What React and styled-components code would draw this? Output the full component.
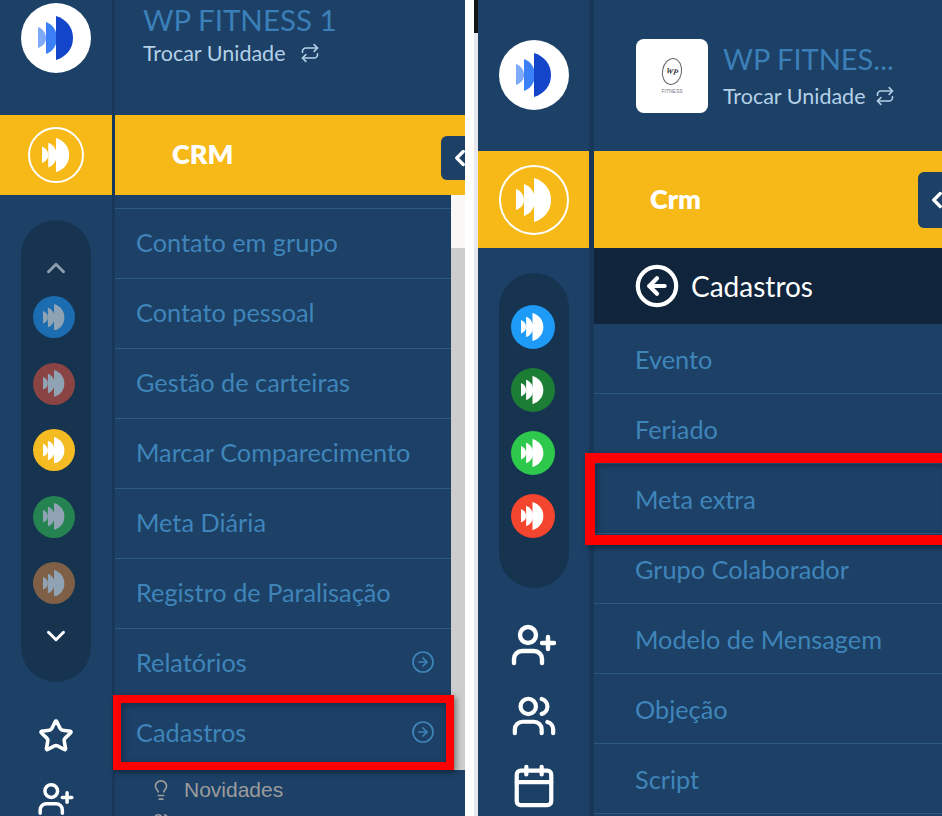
import React from 'react'
import styled, { createGlobalStyle } from 'styled-components'
import {
  Calendar,
  ChevronDown,
  ChevronLeft,
  ChevronUp,
  CircleArrowLeft,
  CircleArrowRight,
  Lightbulb,
  Repeat,
  Star,
  UserPlus,
  Users,
} from 'lucide-react'

const GlobalStyle = createGlobalStyle`
  html, body {
    margin: 0;
    padding: 0;
    background: #fff;
  }
  * {
    box-sizing: border-box;
  }
`

const Page = styled.div`
  display: flex;
  width: 942px;
  height: 816px;
  overflow: hidden;
  font-family: Lato, "Open Sans", sans-serif;
  background: #fff;
`

const Panel = styled.section`
  display: flex;
  flex: none;
  position: relative;
  width: ${(p) => p.$width}px;
  height: 816px;
  overflow: hidden;
  background: #1c4066;
`

const Divider = styled.div`
  flex: none;
  width: 4px;
  margin-left: 9px;
  background: linear-gradient(#141414 33px, #e8e8ee 33px);
`

const Rail = styled.aside`
  display: flex;
  flex-direction: column;
  align-items: center;
  flex: none;
  width: ${(p) => p.$width}px;
  border-right: ${(p) => p.$line}px solid #183859;
`

const LogoSlot = styled.div`
  display: flex;
  flex: none;
  justify-content: center;
  width: 100%;
  height: ${(p) => p.$height}px;
  padding-top: ${(p) => p.$top}px;
`

const LogoCircle = styled.div`
  display: flex;
  align-items: center;
  justify-content: center;
  width: 70px;
  height: 70px;
  border-radius: 50%;
  background: #fff;
`

const RailBand = styled.div`
  display: flex;
  flex: none;
  align-items: center;
  justify-content: center;
  width: 100%;
  height: ${(p) => p.$height}px;
  background: #f6b918;
`

const Ring = styled.div`
  display: flex;
  align-items: center;
  justify-content: center;
  width: ${(p) => p.$size}px;
  height: ${(p) => p.$size}px;
  border: 2px solid #fff;
  border-radius: 50%;
`

const Pill = styled.div`
  display: flex;
  flex-direction: column;
  align-items: center;
  flex: none;
  width: 70px;
  height: ${(p) => p.$height}px;
  margin-top: 25px;
  padding-top: ${(p) => p.$top}px;
  border-radius: 35px;
  background: #16334f;
`

const Chevron = styled.div`
  display: flex;
  flex: none;
  justify-content: center;
  height: 24px;
  color: ${(p) => p.$color};
  margin: ${(p) => p.$margin || 0};
`

const Dots = styled.div`
  display: flex;
  flex-direction: column;
  align-items: center;
  gap: ${(p) => p.$gap}px;
  margin: ${(p) => p.$margin || 0};
`

const Dot = styled.div`
  display: flex;
  align-items: center;
  justify-content: center;
  flex: none;
  width: ${(p) => p.$size}px;
  height: ${(p) => p.$size}px;
  border-radius: 50%;
  background: ${(p) => p.$color};
`

const Tools = styled.div`
  display: flex;
  flex-direction: column;
  align-items: center;
  flex: none;
  margin-top: ${(p) => p.$top}px;
  gap: ${(p) => p.$gap}px;
  color: #fff;
`

const Main = styled.div`
  display: flex;
  flex-direction: column;
  flex: 1;
  min-width: 0;
`

const Header = styled.header`
  display: flex;
  flex: none;
  align-items: flex-start;
  height: ${(p) => p.$height}px;
  padding: ${(p) => p.$top}px 0 0 ${(p) => p.$left}px;
  gap: 15px;
`

const Tile = styled.div`
  display: flex;
  flex-direction: column;
  align-items: center;
  justify-content: center;
  width: 72px;
  height: 74px;
  border-radius: 8px;
  background: #fff;
`

const TileMark = styled.div`
  display: flex;
  align-items: center;
  justify-content: center;
  width: 20px;
  height: 27px;
  border: 1px solid #666;
  border-radius: 50%;
  transform: rotate(10deg);
  font: italic 700 8px "Liberation Serif", serif;
  color: #333;
`

const TileLabel = styled.div`
  margin-top: 3px;
  font: 5px "Liberation Sans", sans-serif;
  color: #778;
`

const UnitInfo = styled.div`
  display: flex;
  flex-direction: column;
  gap: ${(p) => p.$gap}px;
  padding-top: ${(p) => p.$top}px;
`

const UnitName = styled.div`
  font-size: ${(p) => p.$size}px;
  line-height: 32px;
  color: #3b7fb8;
  white-space: nowrap;
`

const SwitchUnit = styled.div`
  display: flex;
  align-items: center;
  gap: ${(p) => p.$gap}px;
  font-size: 21.5px;
  line-height: 26px;
  color: #b4d0e6;
  white-space: nowrap;
`

const Band = styled.div`
  display: flex;
  align-items: center;
  flex: none;
  height: ${(p) => p.$height}px;
  padding: 0 0 3px ${(p) => p.$left}px;
  background: #f6b918;
  color: #fff;
  font-size: 27px;
  font-weight: 800;
`

const Toggle = styled.div`
  display: flex;
  align-items: center;
  justify-content: flex-end;
  position: absolute;
  right: 0;
  top: ${(p) => p.$top}px;
  width: 24px;
  height: ${(p) => p.$height}px;
  border-radius: 6px 0 0 6px;
  background: #1c4066;
  color: #fff;
  overflow: hidden;
`

const Body = styled.div`
  display: flex;
  height: 575px;
  flex: none;
`

const List = styled.nav`
  flex: 1;
  padding-top: ${(p) => p.$top || 0}px;
`

const Row = styled.div`
  display: flex;
  align-items: center;
  justify-content: space-between;
  height: 70px;
  padding: 0 16px ${(p) => p.$lift || 0}px ${(p) => p.$left}px;
  border-${(p) => p.$edge}: 1px solid #2c5b80;
  color: #3f85ba;
  font-size: 25.3px;
  white-space: nowrap;
`

const Scrollbar = styled.div`
  flex: none;
  width: 14px;
  background: linear-gradient(#faf8f6 53px, #cdcdcd 53px);
`

const Footer = styled.div`
  display: flex;
  flex-direction: column;
  flex: none;
  gap: 9px;
  padding: 8px 0 0 35px;
`

const FooterItem = styled.div`
  display: flex;
  flex: none;
  align-items: center;
  gap: 12px;
  height: 24px;
  color: #9c9c9c;
  font: 21px "Liberation Sans", sans-serif;
`

const BackHeader = styled.div`
  display: flex;
  align-items: center;
  flex: none;
  height: 76px;
  padding-left: 40px;
  gap: 11px;
  background: #10243b;
  color: #fff;
  font-size: 28px;
`

const Highlight = styled.div`
  position: absolute;
  left: ${(p) => p.$x}px;
  top: ${(p) => p.$y}px;
  width: ${(p) => p.$w}px;
  height: ${(p) => p.$h}px;
  border: ${(p) => p.$border}px solid #fe0000;
  box-shadow: 2px 2px 6px rgba(0, 0, 0, 0.45), inset 2px 2px 6px rgba(0, 0, 0, 0.3);
`

function BrandMark({ width = 36, colors = ['#fff', '#fff', '#fff'] }) {
  return (
    <svg width={width} height={(width * 44) / 36} viewBox="0 0 36 44">
      <path d="M0 11C5 13 8 17 8 22C8 27 5 30 0 32Z" fill={colors[0]} />
      <path d="M8 6C14 8 19 14 19 22C19 30 14 36 8 38Z" fill={colors[1]} />
      <path d="M18 0C28 3 35 11 35 22C35 33 28 41 18 44Z" fill={colors[2]} />
    </svg>
  )
}

const logoColors = ['#7fa9f9', '#3b80f7', '#1245c9']
const dimMark = ['#8fa3b5', '#8fa3b5', '#8fa3b5']

const leftDots = [
  { color: '#1b6cb0', mark: dimMark },
  { color: '#8a4444', mark: dimMark },
  { color: '#f4bb22' },
  { color: '#248350', mark: dimMark },
  { color: '#7f6047', mark: dimMark },
]
const rightDots = ['#1e9bf7', '#1c7d35', '#2ec84c', '#f4452e']

const leftMenu = [
  { label: 'Contato em grupo' },
  { label: 'Contato pessoal' },
  { label: 'Gestão de carteiras' },
  { label: 'Marcar Comparecimento' },
  { label: 'Meta Diária' },
  { label: 'Registro de Paralisação' },
  { label: 'Relatórios', more: true },
  { label: 'Cadastros', more: true },
]
const rightMenu = ['Evento', 'Feriado', 'Meta extra', 'Grupo Colaborador', 'Modelo de Mensagem', 'Objeção', 'Script']

function LeftPanel() {
  return (
    <Panel $width={465}>
      <Rail $width={115} $line={3}>
        <LogoSlot $height={115} $top={3}>
          <LogoCircle>
            <BrandMark colors={logoColors} />
          </LogoCircle>
        </LogoSlot>
        <RailBand $height={80}>
          <Ring $size={56}>
            <BrandMark width={28} />
          </Ring>
        </RailBand>
        <Pill $height={462} $top={33}>
          <Chevron $color="#8c9cac">
            <ChevronUp size={30} strokeWidth={2.4} />
          </Chevron>
          <Dots $gap={24.5} $margin="19px 4px 0 0">
            {leftDots.map((dot) => (
              <Dot key={dot.color} $size={42} $color={dot.color}>
                <BrandMark width={22} colors={dot.mark} />
              </Dot>
            ))}
          </Dots>
          <Chevron $color="#fff" $margin="17px 0 0">
            <ChevronDown size={30} strokeWidth={2.4} />
          </Chevron>
        </Pill>
        <Tools $top={36} $gap={26}>
          <Star size={36} strokeWidth={2.4} />
          <UserPlus size={38} strokeWidth={2.2} />
        </Tools>
      </Rail>
      <Main>
        <Header $height={115} $top={4} $left={28}>
          <UnitInfo $gap={4} $top={0}>
            <UnitName $size={29.5}>WP FITNESS 1</UnitName>
            <SwitchUnit $gap={14}>
              Trocar Unidade
              <Repeat size={20} />
            </SwitchUnit>
          </UnitInfo>
        </Header>
        <Band $height={80} $left={57}>CRM</Band>
        <Body>
          <List $top={13}>
            {leftMenu.map((item) => (
              <Row key={item.label} $left={21} $edge="top" $lift={4}>
                {item.label}
                {item.more && <CircleArrowRight size={24} strokeWidth={1.7} />}
              </Row>
            ))}
          </List>
          <Scrollbar />
        </Body>
        <Footer>
          <FooterItem>
            <Lightbulb size={22} strokeWidth={1.8} />
            Novidades
          </FooterItem>
          <FooterItem>
            <Users size={22} strokeWidth={1.8} />
          </FooterItem>
        </Footer>
      </Main>
      <Toggle $top={136} $height={44}>
        <ChevronLeft size={26} strokeWidth={3} style={{ marginRight: -8 }} />
      </Toggle>
      <Highlight $x={113} $y={695} $w={341} $h={75} $border={8} />
    </Panel>
  )
}

function RightPanel() {
  return (
    <Panel $width={464}>
      <Rail $width={116} $line={5}>
        <LogoSlot $height={151} $top={40}>
          <LogoCircle>
            <BrandMark colors={logoColors} />
          </LogoCircle>
        </LogoSlot>
        <RailBand $height={97}>
          <Ring $size={70}>
            <BrandMark width={36} />
          </Ring>
        </RailBand>
        <Pill $height={315} $top={32}>
          <Dots $gap={19} $margin="0 2px 0 0">
            {rightDots.map((color) => (
              <Dot key={color} $size={44} $color={color}>
                <BrandMark width={23} />
              </Dot>
            ))}
          </Dots>
        </Pill>
        <Tools $top={33} $gap={24}>
          <UserPlus size={48} strokeWidth={2.2} />
          <Users size={46} strokeWidth={2.2} />
          <Calendar size={46} strokeWidth={2.2} />
        </Tools>
      </Rail>
      <Main>
        <Header $height={151} $top={39} $left={42}>
          <Tile>
            <TileMark>WP</TileMark>
            <TileLabel>FITNESS</TileLabel>
          </Tile>
          <UnitInfo $gap={8} $top={4}>
            <UnitName $size={29}>WP FITNES...</UnitName>
            <SwitchUnit $gap={9}>
              Trocar Unidade
              <Repeat size={20} />
            </SwitchUnit>
          </UnitInfo>
        </Header>
        <Band $height={97} $left={56}>Crm</Band>
        <BackHeader>
          <CircleArrowLeft size={46} strokeWidth={2.2} />
          Cadastros
        </BackHeader>
        <List>
          {rightMenu.map((label) => (
            <Row key={label} $left={41} $edge="bottom">{label}</Row>
          ))}
        </List>
      </Main>
      <Toggle $top={172} $height={56}>
        <ChevronLeft size={26} strokeWidth={3} style={{ marginRight: -8 }} />
      </Toggle>
      <Highlight $x={107} $y={453} $w={370} $h={92} $border={10} />
    </Panel>
  )
}

export default function App() {
  return (
    <Page>
      <GlobalStyle />
      <LeftPanel />
      <Divider />
      <RightPanel />
    </Page>
  )
}
